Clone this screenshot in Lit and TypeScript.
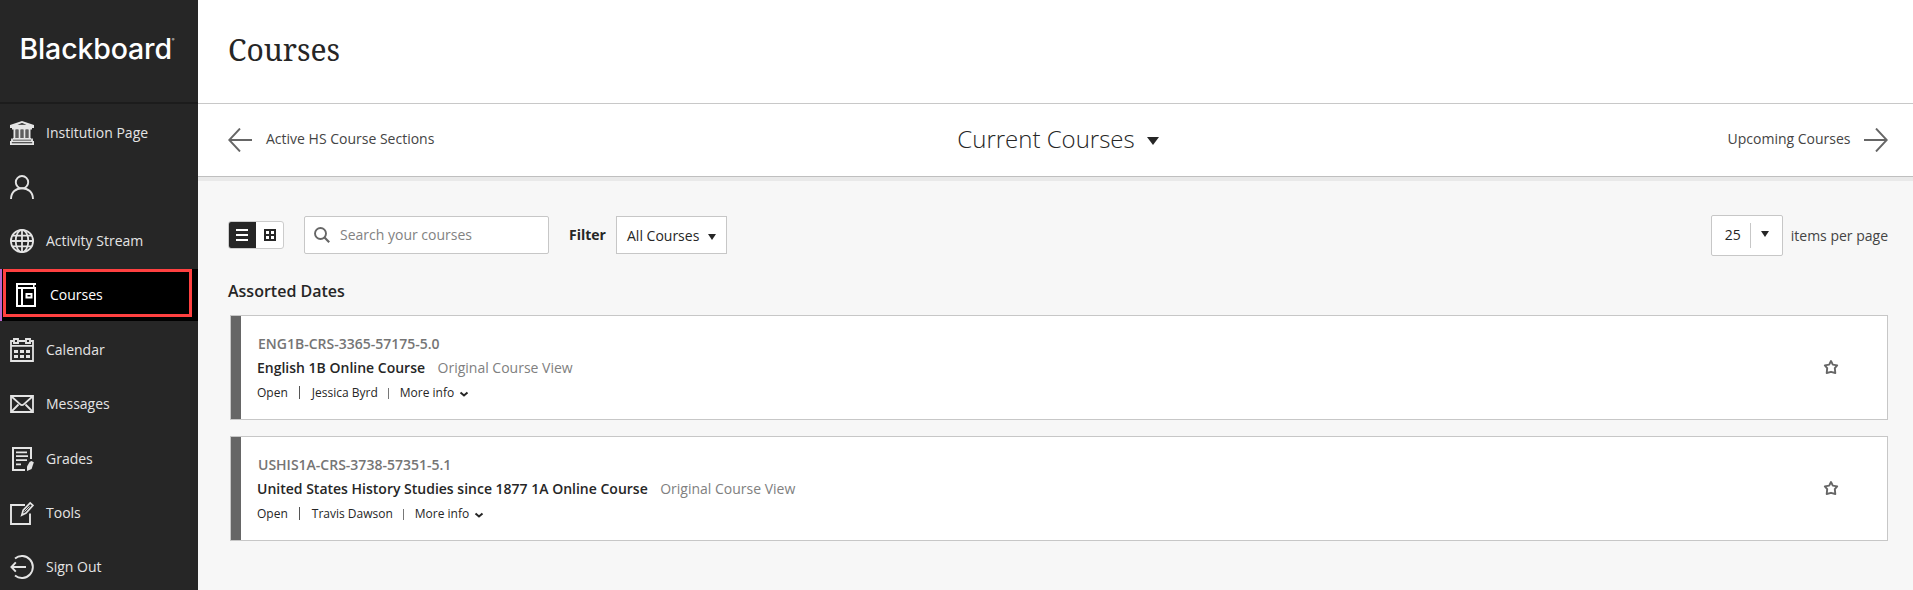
import { LitElement, html, css, svg } from "lit";
import { customElement } from "lit/decorators.js";

const navIcons: Record<string, unknown> = {
  institution: svg`<path d="M12 0L24 4V7H0V4ZM12 2L7.5 3.8H16.5Z" fill-rule="evenodd" fill="currentColor"/><g fill="none" stroke="currentColor"><path d="M2 7.5H22M3 17.8H21" stroke-width="1.8"/><path d="M4.5 8V18M9.5 8V18M14.5 8V18M19.5 8V18" stroke-width="2"/><path d="M7 9V17M12 9V17M17 9V17" stroke-width="0.6"/><path d="M2 17.5V20M22 17.5V20M1 20.4H23M0 23.2H24M0.9 20V24M23.1 20V24" stroke-width="1.8"/></g>`,
  profile: svg`<g fill="none" stroke="currentColor" stroke-width="1.9"><circle cx="12" cy="7.2" r="6.2"/><path d="M1 24C1 17 6 13.2 12 13.2S23 17 23 24"/></g>`,
  globe: svg`<g fill="none" stroke="currentColor" stroke-width="1.8"><circle cx="12" cy="12" r="11.1"/><ellipse cx="12" cy="12" rx="6.3" ry="11.1"/><path d="M12 1V23M1 12H23M2.7 6.7H21.3M2.7 17.3H21.3"/></g>`,
  courses: svg`<g fill="none" stroke="currentColor" stroke-width="2"><path d="M22 1H3V23H21V5H3"/><path d="M19.8 1V5" stroke-width="1.6"/><path d="M8 5V23"/><path d="M12.5 11H17.5V14.5H12.5Z"/></g>`,
  calendar: svg`<g fill="none" stroke="currentColor" stroke-width="2"><path d="M3 3H1V23H23V3H21M9 3H15M1 7.8H23" stroke-width="1.8"/><path d="M4 1H8V5H4ZM16 1H20V5H16Z" stroke-width="1.9"/><path d="M4 13.4H8M10 13.4H14M16 13.4H20M4 18.4H8M10 18.4H14M16 18.4H20" stroke-width="3"/></g>`,
  messages: svg`<g fill="none" stroke="currentColor" stroke-width="1.8"><path d="M1 4H23V20H1Z"/><path d="M1.5 4.5L10 12.2Q12 14 14 12.2L22.5 4.5M1.5 19.5L8.5 12.5M22.5 19.5L15.5 12.5"/></g>`,
  grades: svg`<g fill="none" stroke="currentColor" stroke-width="2"><path d="M15 23H3V1H21V12"/><path d="M6 5.4H17M6 9.2H18M6 13.2H17M6 17.4H11" stroke-width="1.8"/><path d="M21.4 14L23.8 15.2L21.6 22L17 24V19.5L19.6 15Z" fill="currentColor" stroke="none"/></g>`,
  tools: svg`<g fill="none" stroke="currentColor" stroke-width="1.9"><path d="M15 4H1V23H20V12.5"/><path d="M11.8 14.2L13.2 9.2L20.2 2L23 4.4L16 12Z" stroke-width="1.7"/><path d="M14.5 10.6L19.5 5.4" stroke-width="1"/></g>`,
  signout: svg`<g fill="none" stroke="currentColor" stroke-width="1.9"><path d="M5 3.4A11 11 0 1 1 5 20.6"/><path d="M16 12H1.5M5.8 7.4L1.4 12L5.8 16.6"/></g>`,
};

const navItems = [
  { icon: "institution", label: "Institution Page" },
  { icon: "profile", label: "" },
  { icon: "globe", label: "Activity Stream" },
  { icon: "courses", label: "Courses", active: true },
  { icon: "calendar", label: "Calendar" },
  { icon: "messages", label: "Messages" },
  { icon: "grades", label: "Grades" },
  { icon: "tools", label: "Tools" },
  { icon: "signout", label: "Sign Out" },
];

const courses = [
  { code: "ENG1B-CRS-3365-57175-5.0", title: "English 1B Online Course", teacher: "Jessica Byrd" },
  { code: "USHIS1A-CRS-3738-57351-5.1", title: "United States History Studies since 1877 1A Online Course", teacher: "Travis Dawson" },
];

@customElement("side-nav")
class SideNav extends LitElement {
  static styles = css`
    :host { display: flex; flex-direction: column; width: 198px; height: 590px; background: #262626; color: #e4e4e4; overflow: hidden; }
    .brand { box-sizing: border-box; height: 104px; flex: none; display: flex; padding: 30px 0 0 19.5px; border-bottom: 2px solid #1c1c1c; color: #fff; font: 500 28.5px/38px Inter, Lato, sans-serif; letter-spacing: -0.15px; }
    .tm { font-size: 4px; line-height: 20px; }
    .items { display: flex; flex-direction: column; gap: 2px; padding-top: 3px; }
    .item { box-sizing: border-box; height: 52px; flex: none; display: flex; align-items: center; gap: 12px; padding-left: 10px; font-size: 14px; }
    .item:nth-child(5), .item:nth-child(7) { margin-top: 1px; }
    .item svg { width: 24px; height: 24px; flex: none; }
    .item span { line-height: 19px; padding-bottom: 1px; }
    .active { background: #000; color: #fff; border-left: 2px solid #b966cf; padding-left: 1px; align-items: flex-start; }
    .outline { box-sizing: border-box; width: 189px; height: 48px; border: 3px solid #ff4040; display: flex; align-items: center; gap: 12px; padding: 4px 0 0 8px; }
  `;
  render() {
    return html`<div class="brand"><span>Blackboard</span><span class="tm">®</span></div>
      <nav class="items">
        ${navItems.map((n) => {
          const body = html`<svg viewBox="0 0 24 24">${navIcons[n.icon]}</svg><span>${n.label}</span>`;
          return n.active
            ? html`<div class="item active"><div class="outline">${body}</div></div>`
            : html`<div class="item">${body}</div>`;
        })}
      </nav>`;
  }
}

@customElement("course-card")
class CourseCard extends LitElement {
  static properties = { course: {} };
  declare course: (typeof courses)[number];
  static styles = css`
    :host { box-sizing: border-box; height: 105px; display: flex; border: 1px solid #c7c7c7; background: #fff; }
    .bar { width: 10px; background: #666; }
    .body { flex: 1; padding: 15px 0 0 16px; }
    .code { font-size: 14px; line-height: 25px; font-weight: 600; color: #757575; padding-left: 1px; }
    .line { display: flex; font-size: 14px; line-height: 23px; gap: 12.5px; }
    .title { font-weight: 600; color: #262626; }
    .view { color: #808080; }
    .meta { display: flex; align-items: center; font-size: 12px; line-height: 27px; color: #262626; }
    .sep { width: 1px; height: 13px; background: #555; margin: 0 12px 0 11px; }
    .sep.thin { height: 11px; background: #777; margin: 1px 11px 0 10px; }
    .chev { width: 10px; height: 8px; margin: 2px 0 0 5px; }
    .star { width: 16px; height: 16px; margin: 43px 48px 0 0; }
  `;
  render() {
    const c = this.course;
    return html`<div class="bar"></div>
      <div class="body">
        <div class="code">${c.code}</div>
        <div class="line"><span class="title">${c.title}</span><span class="view">Original Course View</span></div>
        <div class="meta"><span>Open</span><span class="sep"></span><span>${c.teacher}</span><span class="sep thin"></span><span>More info</span>
          <svg class="chev" viewBox="0 0 10 8"><path d="M1.5 2.5L5 5.5L8.5 2.5" fill="none" stroke="#262626" stroke-width="2"/></svg></div>
      </div>
      <svg class="star" viewBox="0 0 16 16"><path d="M8 2L9.8 5.6L14.2 6.4L11.8 9.2L12.3 14L8 12.8L3.7 14L4.2 9.2L1.8 6.4L6.2 5.6Z" fill="none" stroke="#666" stroke-width="1.9" stroke-linejoin="round"/></svg>`;
  }
}

@customElement("app-root")
class AppRoot extends LitElement {
  static styles = css`
    :host { display: flex; width: 1913px; height: 590px; overflow: hidden; background: #f7f7f7; font-family: "Open Sans", sans-serif; color: #262626; font-size: 14px; }
    .main { flex: 1; min-width: 0; }
    .head { box-sizing: border-box; height: 104px; background: #fff; border-bottom: 1px solid #c8c8c8; padding: 29px 0 0 30px; font: 400 30px/41px "Noto Serif", "Droid Serif", "DejaVu Serif Condensed", "DejaVu Serif", serif; }
    .terms { box-sizing: border-box; height: 77px; background: #fff; border-bottom: 4px solid #e9e9e9; box-shadow: inset 0 -1px #bfbfbf; display: grid; grid-template-columns: 1fr auto 1fr; align-items: start; padding: 24px 25px 0 30px; }
    .side { display: flex; align-items: center; gap: 14px; color: #444; height: 24px; }
    .side svg { width: 24px; height: 24px; }
    .side span { line-height: 19px; padding-bottom: 3px; }
    .right { justify-content: flex-end; gap: 13.5px; }
    .term { display: flex; align-items: center; gap: 12px; font-size: 24px; line-height: 33px; font-weight: 300; margin-top: -6px; }
    .term svg { width: 12px; height: 8px; margin-top: 5px; }
    .tools { display: flex; align-items: center; padding: 34px 25px 0 30px; height: 41px; line-height: 19px; }
    .toggle { box-sizing: border-box; width: 56px; height: 28px; margin-bottom: 1px; display: flex; border: 1px solid #ccc; border-radius: 3px; background: #fff; overflow: hidden; }
    .toggle svg { width: 28px; height: 28px; margin: -1px; flex: none; }
    .toggle svg + svg { margin-left: 1px; }
    .search { box-sizing: border-box; width: 245px; height: 38px; margin: 0 0 1px 20px; border: 1px solid #c7c7c7; border-radius: 2px; background: #fff; display: flex; align-items: center; gap: 10px; padding-left: 9px; color: #828282; }
    .search svg { width: 16px; height: 16px; }
    .search span { padding-bottom: 1px; }
    .filter { font-weight: 700; margin: 0 0 2px 20px; width: 47px; }
    .select { box-sizing: border-box; width: 111px; height: 38px; margin-bottom: 1px; border: 1px solid #c7c7c7; background: #fff; display: flex; align-items: center; padding: 1px 0 0 10px; gap: 9px; }
    .tri { width: 8px; height: 6px; }
    .select .tri { margin-top: 3px; }
    .size { box-sizing: border-box; width: 72px; height: 41px; margin-left: auto; border: 1px solid #c7c7c7; border-radius: 2px; background: #fff; display: flex; align-items: center; padding-left: 13px; }
    .count { margin-bottom: 2px; }
    .size .tri { margin-bottom: 3px; }
    .rule { width: 1px; height: 25px; background: #c7c7c7; margin: 0 10px 0 9px; }
    .per { margin-left: 8px; color: #444; }
    .group { font-size: 16px; font-weight: 600; line-height: 22px; margin: 24px 0 13px 30px; }
    .cards { display: flex; flex-direction: column; gap: 16px; padding: 0 25px 0 32px; }
  `;
  render() {
    return html`<side-nav></side-nav>
      <div class="main">
        <div class="head">Courses</div>
        <div class="terms">
          <div class="side"><svg viewBox="0 0 24 24"><path d="M24 12H1.5M12 0.5L1.2 12L12 23.5" fill="none" stroke="#666" stroke-width="1.9"/></svg><span>Active HS Course Sections</span></div>
          <div class="term"><span>Current Courses</span><svg viewBox="0 0 12 8"><path d="M0 0H12L6 8Z" fill="#262626"/></svg></div>
          <div class="side right"><span>Upcoming Courses</span><svg viewBox="0 0 24 24"><path d="M0 12H22.5M12 0.5L22.8 12L12 23.5" fill="none" stroke="#666" stroke-width="1.9"/></svg></div>
        </div>
        <div class="tools">
          <div class="toggle">
            <svg viewBox="0 0 28 28"><path d="M0 0H28V28H0Z" fill="#262626"/><path d="M8 9H20M8 14H20M8 19H20" stroke="#fff" stroke-width="2"/></svg>
            <svg viewBox="0 0 28 28"><path d="M9 9H19V19H9ZM14 9V19M9 14H19" fill="none" stroke="#262626" stroke-width="2"/></svg>
          </div>
          <div class="search"><svg viewBox="0 0 16 16"><path d="M10.3 10.3L15.2 15.2" stroke="#666" stroke-width="2.2"/><circle cx="6.5" cy="6.5" r="5.5" fill="none" stroke="#666" stroke-width="1.9"/></svg><span>Search your courses</span></div>
          <span class="filter">Filter</span>
          <div class="select"><span>All Courses</span><svg class="tri" viewBox="0 0 8 6"><path d="M0 0H8L4 6Z" fill="#262626"/></svg></div>
          <div class="size"><span class="count">25</span><span class="rule"></span><svg class="tri" viewBox="0 0 8 6"><path d="M0 0H8L4 6Z" fill="#262626"/></svg></div>
          <span class="per">items per page</span>
        </div>
        <div class="group">Assorted Dates</div>
        <div class="cards">${courses.map((c) => html`<course-card .course=${c}></course-card>`)}</div>
      </div>`;
  }
}
